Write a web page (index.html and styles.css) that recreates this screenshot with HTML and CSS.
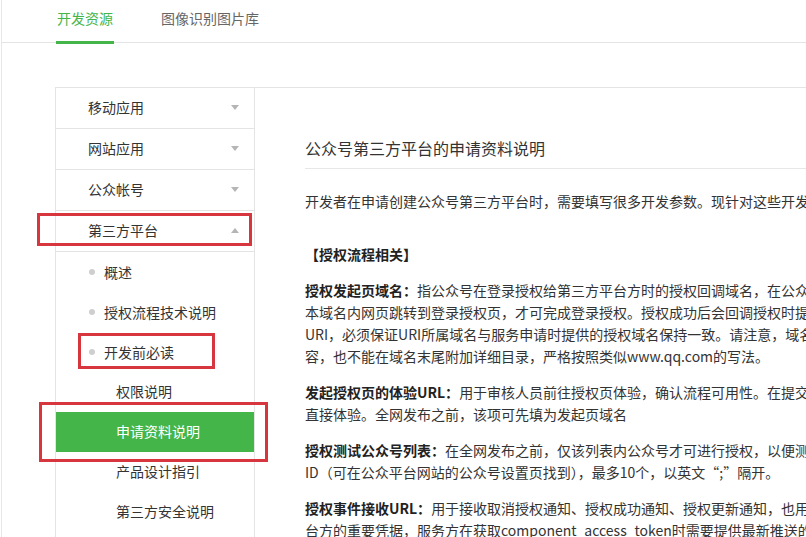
FILE: index.html
```html
<!DOCTYPE html>
<html lang="zh-CN">
<head>
<meta charset="utf-8">
<title>开发资源</title>
<link rel="stylesheet" href="styles.css">
</head>
<body>
<div class="page">
  <nav class="topnav">
    <a class="tab tab-active">开发资源</a>
    <a class="tab">图像识别图片库</a>
  </nav>
  <div class="main">
    <aside class="sidebar">
      <div class="menu-item"><span>移动应用</span><i class="arrow down"></i></div>
      <div class="menu-item"><span>网站应用</span><i class="arrow down"></i></div>
      <div class="menu-item"><span>公众帐号</span><i class="arrow down"></i></div>
      <div class="menu-item"><span>第三方平台</span><i class="arrow up"></i></div>
      <div class="sub-item"><i class="dot"></i>概述</div>
      <div class="sub-item"><i class="dot"></i>授权流程技术说明</div>
      <div class="sub-item"><i class="dot"></i>开发前必读</div>
      <div class="leaf-item">权限说明</div>
      <div class="leaf-item leaf-active">申请资料说明</div>
      <div class="leaf-item">产品设计指引</div>
      <div class="leaf-item">第三方安全说明</div>
    </aside>
    <section class="content">
      <h2 class="title">公众号第三方平台的申请资料说明</h2>
      <p class="intro">开发者在申请创建公众号第三方平台时，需要填写很多开发参数。现针对这些开发参数进行详细说明，以便开发者顺利填写。</p>
      <p class="section-title">【授权流程相关】</p>
      <p class="para"><b>授权发起页域名：</b>指公众号在登录授权给第三方平台方时的授权回调域名，在公众号登录授权时，<br>本域名内网页跳转到登录授权页，才可完成登录授权。授权成功后会回调授权时提供的回调<br>URI，必须保证URI所属域名与服务申请时提供的授权域名保持一致。请注意，域名不能包含<br>容，也不能在域名末尾附加详细目录，严格按照类似www.qq.com的写法。</p>
      <p class="para"><b>发起授权页的体验URL：</b>用于审核人员前往授权页体验，确认流程可用性。在提交全网发布时，<br>直接体验。全网发布之前，该项可先填为发起页域名</p>
      <p class="para"><b>授权测试公众号列表：</b>在全网发布之前，仅该列表内公众号才可进行授权，以便测试。需填写公众号原始<br>ID（可在公众平台网站的公众号设置页找到），最多10个，以英文“;”隔开。</p>
      <p class="para"><b>授权事件接收URL：</b>用于接收取消授权通知、授权成功通知、授权更新通知，也用于接收ticket，ticket是验证平<br>台方的重要凭据，服务方在获取component_access_token时需要提供最新推送的ticket以供验证身份合法性。</p>
    </section>
  </div>
  <div class="mark mark-1"></div>
  <div class="mark mark-2"></div>
  <div class="mark mark-3"></div>
</div>
</body>
</html>
```

FILE: styles.css
```css
html, body {
  margin: 0;
  padding: 0;
  overflow: hidden;
  background: #fff;
}
body {
  font-family: "Noto Sans CJK SC", "Liberation Sans", sans-serif;
  font-size: 14px;
  color: #333;
}
.page {
  position: relative;
  margin-left: 1px;
  border-left: 1px solid #e7e7e7;
  min-height: 537px;
}
.topnav {
  display: flex;
  align-items: flex-end;
  height: 42px;
  border-bottom: 1px solid #e4e4e4;
  padding-left: 54px;
  gap: 46px;
}
.tab {
  display: block;
  line-height: 30px;
  padding: 0 1px 8px;
  border-bottom: 3px solid transparent;
  margin-bottom: -2px;
  color: #666;
  font-size: 14px;
}
.tab-active {
  color: #44b549;
  border-bottom-color: #44b549;
}
.main {
  display: flex;
  margin-top: 44px;
  margin-left: 53px;
  border-top: 1px solid #e4e4e4;
  overflow: hidden;
}
.sidebar {
  flex: none;
  width: 198px;
  border-left: 1px solid #e4e4e4;
  border-right: 1px solid #e4e4e4;
  padding-bottom: 40px;
}
.menu-item {
  display: flex;
  align-items: center;
  justify-content: space-between;
  height: 40px;
  box-sizing: border-box;
  height: 41px;
  border-bottom: 1px solid #e4e4e4;
  padding: 0 15px 3px 32px;
  color: #333;
}
.arrow {
  width: 0;
  height: 0;
  border-left: 4px solid transparent;
  border-right: 4px solid transparent;
  margin-top: 2px;
}
.arrow.down {
  border-top: 5px solid #b5b5b5;
}
.arrow.up {
  border-bottom: 5px solid #b5b5b5;
}
.sub-item {
  display: flex;
  align-items: center;
  height: 40px;
  padding-left: 33px;
  color: #333;
}
.dot {
  width: 6px;
  height: 6px;
  border-radius: 50%;
  background: #cfcfcf;
  margin-right: 9px;
}
.leaf-item {
  height: 38px;
  line-height: 38px;
  padding: 0 0 2px 60px;
  color: #333;
}
.leaf-active {
  background: #44b549;
  color: #fff;
}
.content {
  flex: 1;
  min-width: 0;
  padding: 48px 0 0 50px;
}
.title {
  margin: 0;
  font-size: 16px;
  font-weight: normal;
  line-height: 24px;
  padding-bottom: 8px;
  border-bottom: 1px solid #e7e7e7;
  color: #333;
}
.content p {
  margin: 0;
  line-height: 22px;
  white-space: nowrap;
}
.intro {
  margin-top: 21px !important;
}
.section-title {
  margin-top: 31px !important;
  font-weight: bold;
  color: #222;
}
.para {
  margin-top: 14px !important;
}
.para b {
  color: #222;
}
.mark {
  position: absolute;
  border: 3px solid #d7363e;
  box-sizing: border-box;
}
.mark-1 {
  left: 35px;
  top: 213px;
  width: 215px;
  height: 33px;
}
.mark-2 {
  left: 76px;
  top: 333px;
  width: 137px;
  height: 36px;
}
.mark-3 {
  left: 37px;
  top: 402px;
  width: 229px;
  height: 60px;
}
```
